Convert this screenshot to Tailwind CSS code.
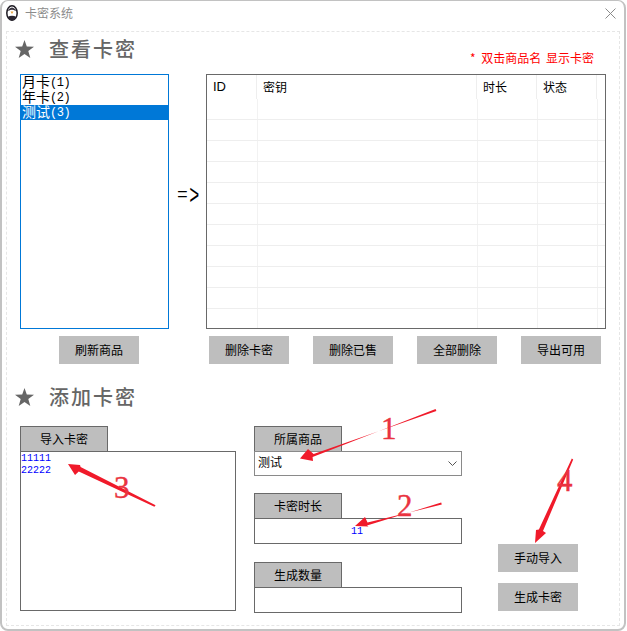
<!DOCTYPE html>
<html lang="zh-CN">
<head>
    <meta charset="UTF-8">
    <title>卡密系统</title>
    <script src="https://cdn.jsdelivr.net/npm/@tailwindcss/browser@4"></script>
</head>
<body class="bg-white font-['Noto_Sans_CJK_SC','Liberation_Sans',sans-serif] overflow-hidden">
    <div class="relative box-border w-[626px] h-[631px] bg-white border-2 border-[#c2c2c2] rounded-lg border-t-[1.5px]">
        <!-- Title bar -->
        <div class="flex items-center h-[24px] mb-[6px] pl-[4px] pr-[8px]">
            <svg class="w-[12px] h-[16px]" viewBox="0 0 12 16">
                <ellipse cx="6" cy="8" rx="5.2" ry="7.2" fill="#fff" stroke="#1d1a22" stroke-width="1.5"/>
                <path d="M1.5 12 Q6 9.5 10.5 12 Q9 15.5 6 15.5 Q3 15.5 1.5 12Z" fill="#2a2630"/>
                <path d="M2 5 Q6 0 10 5 L9.5 6 Q6 3.6 2.5 6Z" fill="#3a3540"/>
                <path d="M4.5 6.5 L7.5 6.5 L6 9Z" fill="#e8a33c"/>
            </svg>
            <span class="ml-[7px] text-[12px] leading-none text-[#8c8c8c]">卡密系统</span>
            <svg class="ml-auto w-[11px] h-[11px]" viewBox="0 0 11 11">
                <path d="M.5.5 10.5 10.5M10.5.5.5 10.5" stroke="#8a8a8a" fill="none"/>
            </svg>
        </div>

        <div class="box-border ml-[4px] w-[614px] h-[595px] border border-dashed border-[#e6e6e6] pl-[8px]">
            <!-- 查看卡密 -->
            <div class="flex h-[34px]">
                <div class="flex items-center text-[#666]">
                    <svg class="w-[19px] h-[18px] mr-[15px]" viewBox="0 0 19 18"><polygon points="9.5,0 11.8,6.6 19,6.8 13.3,11.1 15.3,18 9.5,13.9 3.7,18 5.7,11.1 0,6.8 7.2,6.6" fill="#666"/></svg>
                    <span class="text-[20px] font-medium tracking-[2px]">查看卡密</span>
                </div>
                <span class="ml-auto mr-[25px] self-end text-[12px] leading-[16px] text-[#ff0000] [word-spacing:2px]"><span class="mr-[1px]">*</span> 双击商品名 显示卡密</span>
            </div>

            <div class="flex mt-[8px] ml-[5px]">
                <div class="box-border w-[149px] h-[255px] border border-[#0078d7] text-[14px] text-black">
                    <div class="box-border flex items-center h-[15px] pb-[3px] pl-[1px] leading-[12px]">月卡<span class="mt-[4px] font-['Liberation_Mono'] text-[12px] -tracking-[0.5px] leading-[12px]">(1)</span></div>
                    <div class="box-border flex items-center h-[15px] pb-[3px] pl-[1px] leading-[12px]">年卡<span class="mt-[4px] font-['Liberation_Mono'] text-[12px] -tracking-[0.5px] leading-[12px]">(2)</span></div>
                    <div class="box-border flex items-center h-[15px] pb-[3px] pl-[1px] leading-[12px] bg-[#0078d7] text-white">测试<span class="mt-[4px] font-['Liberation_Mono'] text-[12px] -tracking-[0.5px] leading-[12px]">(3)</span></div>
                </div>
                <div class="flex items-center w-[37px] pl-[8px] pb-[10px] font-['Liberation_Mono'] text-black">
                    <span class="pb-[3px] text-[18px] leading-none">=</span>
                    <span class="-ml-[2px] text-[28px] leading-none scale-x-[0.6]">&gt;</span>
                </div>
                <div class="box-border w-[400px] h-[255px] border border-[#696969] overflow-hidden">
                    <div class="grid grid-cols-[50px_220px_60px_60px_8px] h-[24px] text-[12px] leading-[24px] text-black">
                        <div class="pl-[6px] border-r border-[#eeeeee] font-['Liberation_Sans'] text-[13px]">ID</div>
                        <div class="pl-[6px] border-r border-[#eeeeee]">密钥</div>
                        <div class="pl-[6px] border-r border-[#eeeeee]">时长</div>
                        <div class="pl-[6px] border-r border-[#eeeeee]">状态</div>
                        <div></div>
                    </div>
                    <div id="rows"></div>
                </div>
            </div>

            <div class="flex mt-[7px] text-[12px] leading-[28px] text-center text-black">
                <div class="w-[80px] h-[28px] bg-[#bebebe] ml-[44px]">刷新商品</div>
                <div class="w-[80px] h-[28px] bg-[#bebebe] ml-[70px]">删除卡密</div>
                <div class="w-[80px] h-[28px] bg-[#bebebe] ml-[24px]">删除已售</div>
                <div class="w-[80px] h-[28px] bg-[#bebebe] ml-[24px]">全部删除</div>
                <div class="w-[80px] h-[28px] bg-[#bebebe] ml-[24px]">导出可用</div>
            </div>

            <!-- 添加卡密 -->
            <div class="flex items-center h-[34px] mt-[16px] text-[#666]">
                <svg class="w-[19px] h-[18px] mr-[15px]" viewBox="0 0 19 18"><polygon points="9.5,0 11.8,6.6 19,6.8 13.3,11.1 15.3,18 9.5,13.9 3.7,18 5.7,11.1 0,6.8 7.2,6.6" fill="#666"/></svg>
                <span class="text-[20px] font-medium tracking-[2px]">添加卡密</span>
            </div>

            <div class="flex mt-[12px] ml-[5px] text-[12px] text-black">
                <div class="w-[216px]">
                    <div class="box-border w-[88px] h-[26px] -mb-px border border-[#696969] bg-[#bebebe] text-center leading-[24px]">导入卡密</div>
                    <div class="box-border h-[160px] border border-[#696969] font-['Liberation_Mono'] text-[10px] leading-[12px] text-[#0000ff]">
                        <div class="pt-[1px]">11111</div>
                        <div>22222</div>
                    </div>
                </div>

                <div class="w-[208px] ml-[18px]">
                    <div class="box-border w-[88px] h-[26px] -mb-px border border-[#696969] bg-[#bebebe] text-center leading-[24px]">所属商品</div>
                    <div class="box-border flex items-center justify-between h-[25px] px-[3px] border border-[#8a8a8a] bg-white">
                        <span class="pb-[3px]">测试</span>
                        <svg class="w-[9px] h-[5px] mr-[1px]" viewBox="0 0 9 5"><path d="M.5.5 4.5 4.5 8.5.5" fill="none" stroke="#555"/></svg>
                    </div>

                    <div class="box-border w-[88px] h-[26px] -mb-px mt-[17px] border border-[#696969] bg-[#bebebe] text-center leading-[24px]">卡密时长</div>
                    <div class="box-border h-[26px] border border-[#696969] pt-[6px] pl-[96px] font-['Liberation_Mono'] text-[10px] leading-[14px] text-[#0000ff]">11</div>

                    <div class="box-border w-[88px] h-[26px] -mb-px mt-[18px] border border-[#696969] bg-[#bebebe] text-center leading-[24px]">生成数量</div>
                    <div class="box-border h-[26px] border border-[#696969]"></div>
                </div>

                <div class="w-[80px] ml-[36px] pt-[118px] text-center leading-[28px]">
                    <div class="h-[28px] bg-[#bebebe]">手动导入</div>
                    <div class="h-[28px] mt-[11px] bg-[#bebebe]">生成卡密</div>
                </div>
            </div>
        </div>

        <!-- Red annotations drawn over the window -->
        <svg class="absolute -left-[2px] -top-[1.5px] w-[627px] h-[631px] pointer-events-none" viewBox="0 0 627 631">
            <g fill="#f01a2a">
                <polygon points="435.6,409 436.4,411 313.6,454 308,449 300,458.5 313,461 312.6,457"/>
                <polygon points="441.2,502.6 441.8,504.6 367.5,522.5 365,517 355,526 368.5,526.5 367,525.5"/>
                <polygon points="155.6,505.2 154.4,506.8 78.8,471.4 75,475 68,464 80,465 80.6,467"/>
                <polygon points="571.8,458.6 573.2,459.4 543,531 546,533 535,543 536,530 538.9,529.4"/>
            </g>
        </svg>
        <span class="absolute -left-[2px] -top-[1.5px] w-0 h-0 font-['Liberation_Serif'] text-[31px] leading-none text-[#ea3340] [-webkit-text-stroke:0.4px_#ea3340]">
            <span class="absolute left-[381px] top-[413px]">1</span>
            <span class="absolute left-[397px] top-[490px]">2</span>
            <span class="absolute left-[114px] top-[472px]">3</span>
            <span class="absolute left-[557px] top-[465px]">4</span>
        </span>
    </div>
    <script>
        // Empty table body: ten 21px rows, then the unruled remainder
        var html = '';
        for (var i = 0; i < 11; i++) {
            var h = i === 10 ? 'h-[20px]' : 'h-[21px] border-b';
            html += '<div class="box-border grid grid-cols-[51px_220px_60px_60px_8px] border-[#eeeeee] ' + h + '">'
                + '<div class="border-r border-[#f2f2f2]"></div><div class="border-r border-[#f2f2f2]"></div>'
                + '<div class="border-r border-[#f2f2f2]"></div><div class="border-r border-[#f2f2f2]"></div><div></div></div>';
        }
        document.getElementById('rows').innerHTML = html;
    </script>
</body>
</html>
